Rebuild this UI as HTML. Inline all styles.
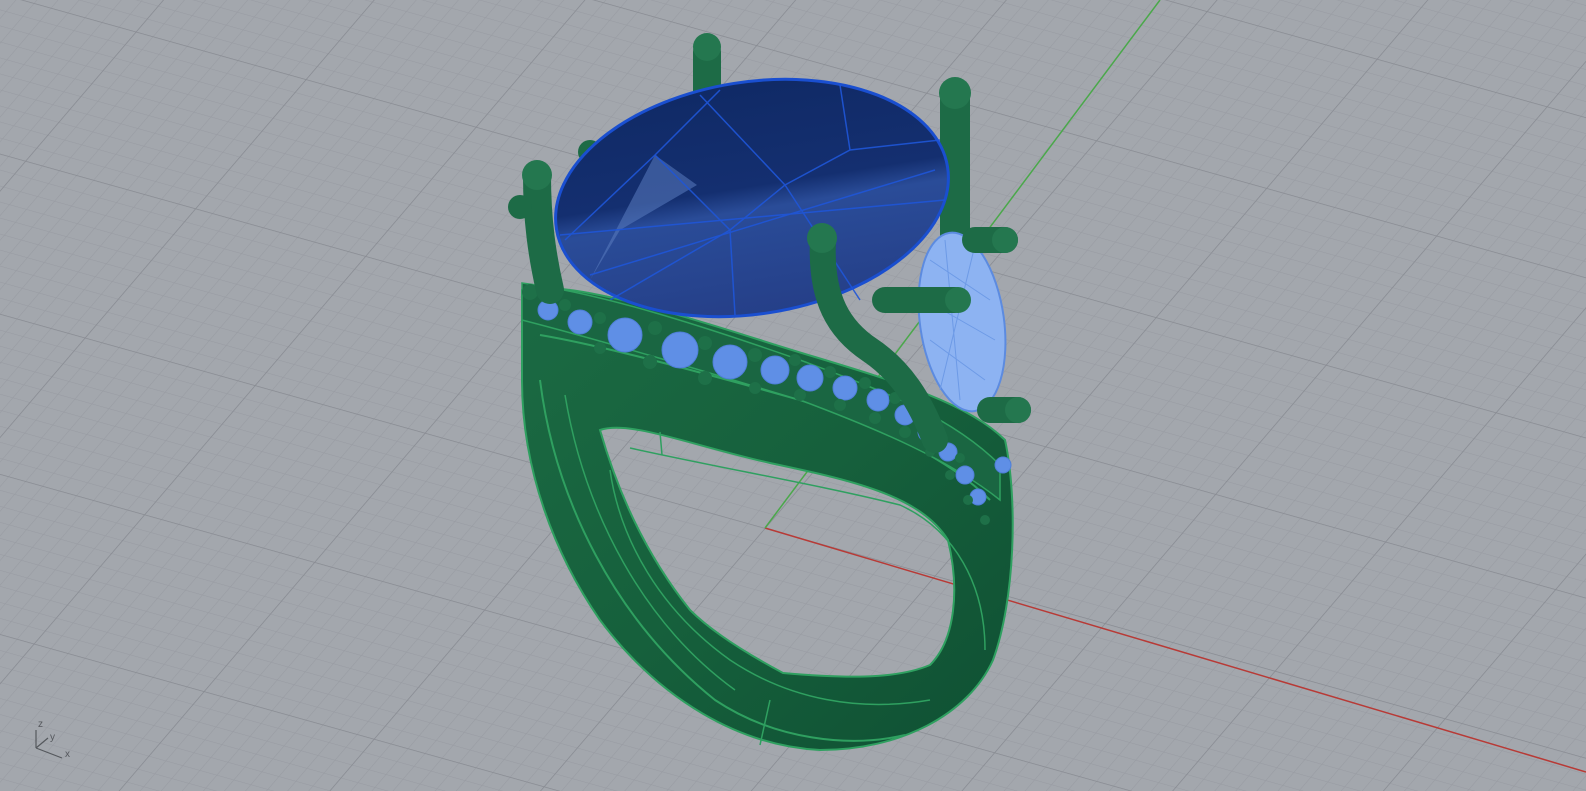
<!DOCTYPE html>
<html><head><style>
html,body{margin:0;padding:0;width:1586px;height:791px;overflow:hidden;background:#a3a7ad}
svg{display:block}
</style></head><body>
<svg width="1586" height="791" viewBox="0 0 1586 791" xmlns="http://www.w3.org/2000/svg">
<defs>
<pattern id="g" width="17" height="17" patternUnits="userSpaceOnUse" patternTransform="matrix(1,0.28,-0.65,0.76,765,528)">
<path d="M0 0H17M0 0V17" stroke="#989ba2" stroke-width="1.2" fill="none"/>
</pattern>
<pattern id="G" width="170" height="170" patternUnits="userSpaceOnUse" patternTransform="matrix(1,0.28,-0.65,0.76,765,528)">
<path d="M0 0H170M0 0V170" stroke="#888b92" stroke-width="1.5" fill="none"/>
</pattern>
<linearGradient id="gem" x1="0" y1="0" x2="0" y2="1">
<stop offset="0" stop-color="#102a66"/><stop offset="0.45" stop-color="#142f70"/><stop offset="0.55" stop-color="#2a4c98"/><stop offset="1" stop-color="#253f88"/>
</linearGradient>
<linearGradient id="band" x1="0" y1="0" x2="1" y2="1">
<stop offset="0" stop-color="#1b6a43"/><stop offset="0.5" stop-color="#16603c"/><stop offset="1" stop-color="#0f5033"/>
</linearGradient>
</defs>
<rect width="1586" height="791" fill="#a3a7ad"/>
<rect width="1586" height="791" fill="url(#g)"/>
<rect width="1586" height="791" fill="url(#G)"/>
<line x1="765" y1="528" x2="1586" y2="772" stroke="#b83a36" stroke-width="1.5"/>
<line x1="765" y1="528" x2="1160" y2="0" stroke="#4aa84a" stroke-width="1.5"/>

<!-- back prongs -->
<rect x="693" y="40" width="28" height="80" rx="12" fill="#1d6b46"/>
<rect x="940" y="80" width="30" height="220" rx="14" fill="#1d6b46"/>
<circle cx="955" cy="93" r="16" fill="#24774f"/>
<circle cx="707" cy="47" r="14" fill="#24774f"/>
<circle cx="590" cy="152" r="12" fill="#1d6b46"/>

<!-- ring band -->
<path fill-rule="evenodd" fill="url(#band)" stroke="#2fa060" stroke-width="2" d="M522 290 C560 280 650 305 760 340 C860 372 960 395 1005 440 C1018 500 1015 600 993 660 C968 715 900 750 820 750 C740 746 660 700 600 620 C555 555 522 470 522 380 Z
M600 430 C630 420 690 445 770 463 C850 480 920 495 948 540 C960 590 955 640 930 665 C895 680 840 678 783 673 C740 650 710 630 690 610 C650 560 620 500 600 430 Z"/>
<g stroke="#2fa060" fill="none">
<path d="M540 335 C600 345 700 372 800 400 C880 425 950 460 990 500" stroke-width="2"/>
<path d="M540 380 C555 500 615 620 715 700 C775 740 850 748 905 735" stroke-width="2"/>
<path d="M565 395 C585 515 645 625 735 690" stroke-width="1.5"/>
<path d="M630 448 C720 468 820 485 900 505 C955 530 985 585 985 650" stroke-width="1.5"/>
<path d="M610 470 C620 540 660 610 730 660 C790 700 860 712 930 700" stroke-width="1.5"/>
<path d="M770 700 L760 745 M660 432 L662 455" stroke-width="1.5"/>
</g>

<!-- main gem -->
<g transform="rotate(-9 752 198)">
<ellipse cx="752" cy="198" rx="198" ry="116" fill="url(#gem)" stroke="#1a4fd0" stroke-width="3"/>
</g>
<path d="M655 155 L697 185 L620 230 L590 280 Z" fill="#5a7cc0" opacity="0.55"/>
<g stroke="#1f56d8" stroke-width="1.5" fill="none" opacity="0.9">
<path d="M655 155 L730 230 L785 185 L850 150 L940 140"/>
<path d="M565 240 L655 155 L720 90 M730 230 L735 315 M785 185 L860 300 M730 230 L610 300 M850 150 L840 85 M785 185 L700 95"/>
<path d="M560 235 L945 200 M590 275 L935 170"/>
</g>

<!-- shank top ridge -->
<path d="M522 283 C600 293 700 325 800 360 C880 390 950 415 1000 465 L1000 500 C950 460 880 430 800 400 C700 370 600 340 522 320 Z" fill="#1a6642" stroke="#2fa060" stroke-width="1.5"/>
<!-- pave stones -->
<g fill="#5f8fe6" stroke="#4f7fd8">
<circle cx="548" cy="310" r="10"/><circle cx="580" cy="322" r="12"/><circle cx="625" cy="335" r="17"/><circle cx="680" cy="350" r="18"/><circle cx="730" cy="362" r="17"/><circle cx="775" cy="370" r="14"/><circle cx="810" cy="378" r="13"/><circle cx="845" cy="388" r="12"/><circle cx="878" cy="400" r="11"/><circle cx="905" cy="415" r="10"/><circle cx="928" cy="432" r="10"/><circle cx="948" cy="452" r="9"/><circle cx="965" cy="475" r="9"/><circle cx="978" cy="497" r="8"/><circle cx="1003" cy="465" r="8"/>
</g>
<g fill="#1e7048">
<circle cx="565" cy="305" r="6"/><circle cx="600" cy="318" r="6"/><circle cx="655" cy="328" r="7"/><circle cx="705" cy="343" r="7"/><circle cx="755" cy="355" r="7"/><circle cx="795" cy="360" r="6"/><circle cx="830" cy="372" r="6"/><circle cx="865" cy="383" r="6"/><circle cx="895" cy="398" r="6"/><circle cx="920" cy="415" r="6"/><circle cx="940" cy="435" r="6"/><circle cx="960" cy="458" r="5"/>
<circle cx="600" cy="348" r="6"/><circle cx="650" cy="362" r="7"/><circle cx="705" cy="378" r="7"/><circle cx="755" cy="388" r="6"/><circle cx="800" cy="395" r="6"/><circle cx="840" cy="405" r="6"/><circle cx="875" cy="418" r="6"/><circle cx="905" cy="432" r="6"/><circle cx="930" cy="452" r="5"/><circle cx="950" cy="475" r="5"/><circle cx="968" cy="500" r="5"/><circle cx="985" cy="520" r="5"/>
<circle cx="530" cy="292" r="8"/>
</g>

<!-- side gem -->
<ellipse cx="962" cy="322" rx="42" ry="90" transform="rotate(-8 962 322)" fill="#8db3f2" stroke="#5c8be0" stroke-width="2"/>
<g stroke="#6d9ae6" stroke-width="1" fill="none">
<path d="M930 260 L990 300 M925 300 L995 340 M930 340 L985 380 M945 240 L960 400 M975 245 L940 390"/>
</g>

<!-- front prongs -->
<path d="M537 175 C537 220 542 255 550 290" stroke="#1d6b46" stroke-width="28" fill="none" stroke-linecap="round"/>
<circle cx="537" cy="175" r="15" fill="#24774f"/>
<circle cx="520" cy="207" r="12" fill="#1d6b46"/>
<path d="M823 240 C820 300 840 330 870 350 C900 370 920 400 935 440" stroke="#1d6b46" stroke-width="26" fill="none" stroke-linecap="round"/>
<circle cx="822" cy="238" r="15" fill="#24774f"/>
<path d="M885 300 L955 300" stroke="#1d6b46" stroke-width="26" stroke-linecap="round"/>
<circle cx="958" cy="300" r="13" fill="#24774f"/>
<path d="M975 240 L1005 240" stroke="#1d6b46" stroke-width="26" stroke-linecap="round"/>
<circle cx="1005" cy="240" r="13" fill="#24774f"/>
<path d="M990 410 L1018 410" stroke="#1d6b46" stroke-width="26" stroke-linecap="round"/>
<circle cx="1018" cy="410" r="13" fill="#24774f"/>

<!-- axis icon -->
<g stroke="#55585d" stroke-width="1.2" fill="none">
<line x1="36" y1="748" x2="36" y2="730"/><line x1="36" y1="748" x2="48" y2="738"/><line x1="36" y1="748" x2="62" y2="758"/>
</g>
<g font-family="Liberation Sans, sans-serif" font-size="10" fill="#55585d">
<text x="38" y="727">z</text><text x="50" y="740">y</text><text x="65" y="757">x</text>
</g>
</svg>
</body></html>
